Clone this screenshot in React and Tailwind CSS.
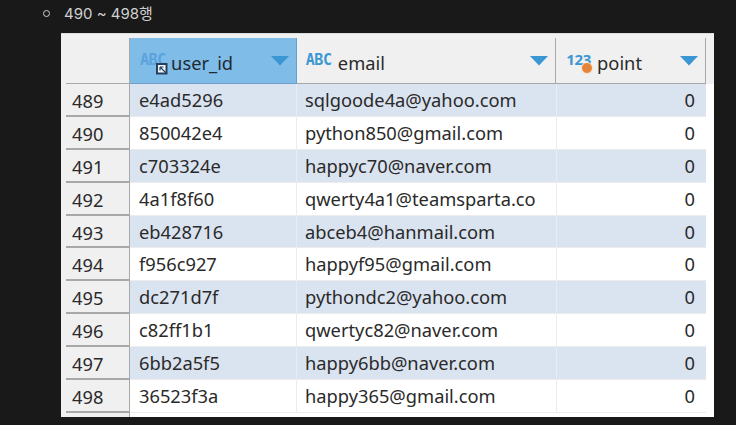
const rows = [
  ["489", "e4ad5296", "sqlgoode4a@yahoo.com"],
  ["490", "850042e4", "python850@gmail.com"],
  ["491", "c703324e", "happyc70@naver.com"],
  ["492", "4a1f8f60", "qwerty4a1@teamsparta.co"],
  ["493", "eb428716", "abceb4@hanmail.com"],
  ["494", "f956c927", "happyf95@gmail.com"],
  ["495", "dc271d7f", "pythondc2@yahoo.com"],
  ["496", "c82ff1b1", "qwertyc82@naver.com"],
  ["497", "6bb2a5f5", "happy6bb@naver.com"],
  ["498", "36523f3a", "happy365@gmail.com"],
];

function Arrow() {
  return (
    <svg width="18" height="10" viewBox="0 0 18 10" className="shrink-0">
      <path d="M0 0H18L9 9.500Z" fill="#3b97d3" />
    </svg>
  );
}

function Abc({ faded }) {
  return (
    <span
      className={`text-[15px] leading-none font-bold tracking-[-0.3px] shrink-0 mb-[1px] font-['DejaVu_Sans_Mono',monospace] ${faded ? "text-[#5aa3dc]" : "text-[#3b97d3]"}`}
    >
      ABC
    </span>
  );
}

export default function App() {
  return (
    <div className="w-[736px] h-[425px] bg-[#191919] overflow-hidden font-['Noto_Sans','Open_Sans',sans-serif]">
      <div className="h-[33px] pl-[43px] flex items-start pt-[3px] gap-[14px]">
        <span className="w-[7px] h-[7px] rounded-full border border-[#d0d0d0] mt-[7px]" />
        <span className="text-[15px] leading-[20px] mt-[1px] text-[#d0d0d0] font-['Inter','Noto_Sans_CJK_KR',sans-serif]">490 ~ 498행</span>
      </div>

      <div className="ml-[61px] w-[653px] h-[384px] bg-white overflow-hidden text-[18.3px] text-[#2a2a2a]">
        <div className="h-[51px] flex bg-[#f0f0f0] border-t border-[#dcdcdc] pl-[5px] pr-[8px] pt-[4px]">
          <div className="w-[64px] border-b border-r border-[#a8a8a8]" />
          <div className="w-[167px] bg-[#7fbce8] border-b border-r border-[#6d9fc6] flex items-center pl-[10px] pr-[7px] relative">
            <Abc faded />
            <span className="ml-[5px] pt-[4px] flex-1 text-[#1f2a33]">user_id</span>
            <Arrow />
            <svg width="12" height="12" viewBox="0 0 12 12" className="absolute left-[26px] top-[25px]">
              <rect x="1" y="1" width="9.500" height="9.500" fill="#f2f5f8" stroke="#24415f" strokeWidth="2" />
              <path d="M4 4H7.500M4 4V7.500M4 4L10 10" stroke="#24415f" strokeWidth="1.200" fill="none" />
            </svg>
          </div>
          <div className="w-[260px] border-b border-r border-[#a8a8a8] flex items-center pl-[9px] pr-[7px]">
            <Abc />
            <span className="ml-[6px] pt-[4px] flex-1">email</span>
            <Arrow />
          </div>
          <div className="w-[150px] border-b border-r border-[#a8a8a8] flex items-center pl-[10px] pr-[7px] relative">
            <span className="text-[15px] leading-none font-bold text-[#3b97d3] shrink-0 mb-[2px] tracking-[-0.3px] font-['Noto_Sans',sans-serif]">123</span>
            <span className="ml-[6px] pt-[4px] flex-1">point</span>
            <Arrow />
            <span className="absolute left-[25px] top-[24px] w-[12px] h-[12px] rounded-full bg-[#e5853b] border border-[#f5e8da]" />
          </div>
        </div>

        {rows.map(([n, id, mail], i) => (
          <div key={n} className="h-[32.9px] flex pr-[8px]">
            <div className="w-[69px] pl-[5px] bg-[#f0f0f0] flex">
              <div className="flex-1 border-b-2 border-r border-[#a8a8a8] pl-[6px] pt-[1px] leading-[31px]">
                {n}
              </div>
            </div>
            <div className={`flex-1 flex border-b border-[#ececec] leading-[32px] ${i % 2 === 0 ? "bg-[#dae3f0]" : "bg-white"}`}>
              <div className="w-[167px] pl-[9px] border-r border-[#e8edf4]">{id}</div>
              <div className="w-[260px] pl-[8px] border-r border-[#e8edf4]">{mail}</div>
              <div className="w-[149px] pr-[11px] text-right">0</div>
            </div>
          </div>
        ))}

        <div className="h-[10px] w-[69px] bg-[#f0f0f0] border-r border-[#a8a8a8]" />
      </div>
    </div>
  );
}
